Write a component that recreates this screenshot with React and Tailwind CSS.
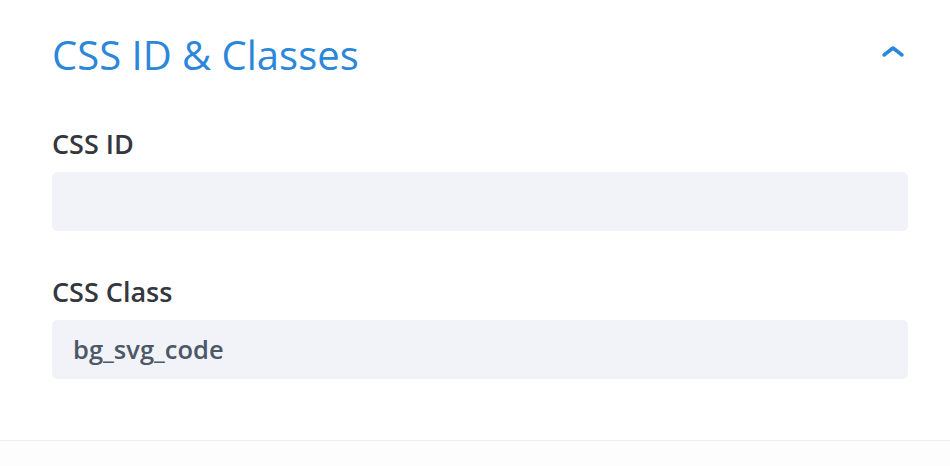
import React from 'react';

// Settings panel: "CSS ID & Classes" toggle section
const Field = ({ label, value, className = '' }) => (
  <div className={'flex flex-col ' + className}>
    <label className="text-[27px] leading-[36px] font-semibold text-[#333840]">{label}</label>
    <div className="mt-[10px] h-[59px] rounded-[5px] bg-[#f1f3f9] flex items-center px-[21px] text-[25.5px] font-semibold text-[#4c5866]">
      {value}
    </div>
  </div>
);

export default function App() {
  return (
    <div className="w-[950px] h-[466px] bg-white overflow-hidden" style={{ fontFamily: '"Open Sans", sans-serif' }}>
      <div className="h-[441px] border-b border-[#ececec] pl-[52px] pr-[42px] pt-[28px]">
        <div className="flex items-start justify-between">
          <h2 className="text-[40px] leading-[54px] text-[#2b87da] font-normal">CSS ID &amp; Classes</h2>
          <svg width="24" height="14" viewBox="0 0 24 14" className="mt-[17px] mr-[3px]">
            <path d="M3 10 L12 3 L21 10" fill="none" stroke="#2b87da" strokeWidth="3.5" strokeLinecap="round" strokeLinejoin="round" />
          </svg>
        </div>
        <div className="mt-[44px] flex flex-col">
          <Field label="CSS ID" value="" />
          <Field label="CSS Class" value="bg_svg_code" className="mt-[43px]" />
        </div>
      </div>
      <div className="h-[25px] bg-[#fdfdfd]" />
    </div>
  );
}
